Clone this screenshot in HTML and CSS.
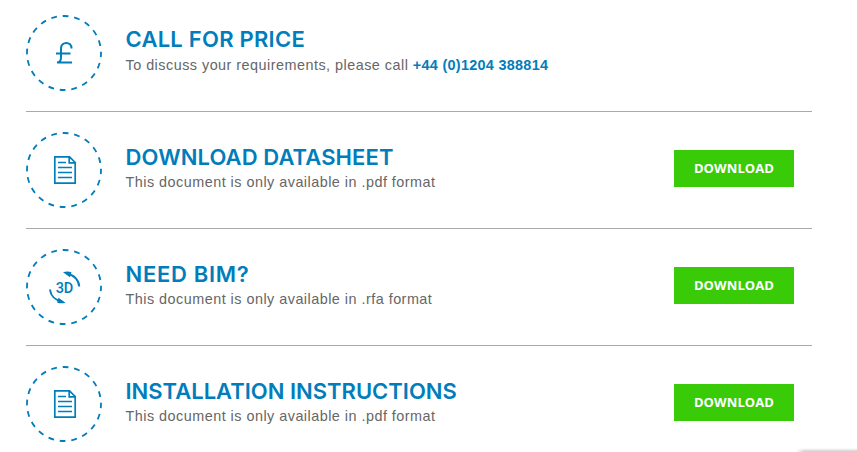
FILE: index.html
```
<!DOCTYPE html>
<html lang="en">
<head>
  <meta charset="UTF-8" />
  <meta name="viewport" content="width=device-width, initial-scale=1.0"/>
  <title>Downloads</title>
  <link rel="stylesheet" href="styles.css">
</head>
<body>

<div class="resources">
  <div class="resource">
    <svg class="icon" viewBox="0 0 76 76">
      <circle class="ring" cx="38" cy="38" r="37"/>
      <path class="line" d="M45.5 33.5C45.8 26 35 26 35 33.5V42.5C35 45.5 33.5 47.3 31 47.5H46M30 38.5H44.5"/>
    </svg>
    <div class="info">
      <h2 class="title price">Call for price</h2>
      <p class="text">To discuss your requirements, please call <a class="phone" href="tel:+4401204388814">+44 (0)1204 388814</a></p>
    </div>
  </div>

  <div class="resource">
    <svg class="icon" viewBox="0 0 76 76">
      <circle class="ring" cx="38" cy="38" r="37"/>
      <path class="doc" d="M28.8 24.8H43.5L49.2 30.5V51.2H28.8ZM43.2 25V30.8H49M32 30.5H40M32 35.5H46M32 40.5H46M32 45.5H46"/>
    </svg>
    <div class="info">
      <h2 class="title datasheet">Download datasheet</h2>
      <p class="text">This document is only available in .pdf format</p>
    </div>
    <a class="button" href="#">Download</a>
  </div>

  <div class="resource">
    <svg class="icon" viewBox="0 0 76 76">
      <circle class="ring" cx="38" cy="38" r="37"/>
      <path class="line" d="M41 24.8C48.5 26 53 31.5 53.2 37.5M24 40.5C24.5 46.5 29 51 35.5 52.3"/>
      <path class="arrow" d="M37 23.3C40 22.3 43 22.5 45.500 23.3L44 28.2ZM39.5 53.7C36.5 54.7 34 54.5 31 53.5L32.5 48.8Z"/>
      <text class="label" x="38.3" y="43.5">3D</text>
    </svg>
    <div class="info">
      <h2 class="title bim">Need BIM?</h2>
      <p class="text">This document is only available in .rfa format</p>
    </div>
    <a class="button" href="#">Download</a>
  </div>

  <div class="resource">
    <svg class="icon" viewBox="0 0 76 76">
      <circle class="ring" cx="38" cy="38" r="37"/>
      <path class="doc" d="M28.8 24.8H43.5L49.2 30.5V51.2H28.8ZM43.2 25V30.8H49M32 30.5H40M32 35.5H46M32 40.5H46M32 45.5H46"/>
    </svg>
    <div class="info">
      <h2 class="title">Installation instructions</h2>
      <p class="text">This document is only available in .pdf format</p>
    </div>
    <a class="button" href="#">Download</a>
  </div>
</div>

<div class="chat"></div>

</body>
</html>
```
FILE: styles.css
```
body {
  position: relative;
  margin: 0;
  height: 452px;
  background: #fff;
  font-family: "Liberation Sans", Arial, sans-serif;
}

.resources {
  width: 786px;
  padding: 15px 0 0 26px;
}

.resource {
  display: flex;
  align-items: center;
  height: 76px;
  padding-bottom: 20px;
  margin-bottom: 20px;
  border-bottom: 1px solid #a9a9a9;
}

.resource:last-child {
  padding-bottom: 0;
  margin-bottom: 0;
  border-bottom: none;
}

.icon {
  flex: none;
  width: 76px;
  height: 76px;
  margin-right: 23.5px;
}

.ring {
  fill: none;
  stroke: #007dba;
  stroke-width: 1.8;
  stroke-dasharray: 5.8 5.824;
  stroke-dashoffset: 1.6;
}

.line,
.doc {
  fill: none;
  stroke: #007dba;
  stroke-width: 2;
}

.doc {
  stroke-width: 1.7;
}

.arrow {
  fill: #007dba;
}

.label {
  fill: #007dba;
  font-family: Roboto, sans-serif;
  font-size: 14.5px;
  font-weight: 500;
  text-anchor: middle;
  letter-spacing: -0.4px;
}

.info {
  flex: 1;
  padding-bottom: 5px;
}

.title {
  margin: 0;
  color: #007dba;
  font-family: Inter, sans-serif;
  font-size: 22px;
  font-weight: 600;
  line-height: 28px;
  text-transform: uppercase;
  white-space: nowrap;
}

.price {
  margin-top: -1px;
  padding-bottom: 1px;
  letter-spacing: 0.25px;
}

.datasheet {
  letter-spacing: 0.1px;
}

.bim {
  letter-spacing: 0.7px;
}

.text {
  margin: 0;
  color: #666;
  font-size: 14.4px;
  line-height: 22px;
  letter-spacing: 0.48px;
  white-space: nowrap;
}

.phone {
  color: #007dba;
  font-weight: bold;
  letter-spacing: 0.3px;
  text-decoration: none;
}

.button {
  width: 120px;
  height: 37px;
  margin-right: 18px;
  margin-bottom: 3px;
  background: #39cb07;
  color: #fff;
  font-family: "Open Sans", sans-serif;
  font-size: 13px;
  font-weight: 700;
  line-height: 37px;
  letter-spacing: 0.1px;
  text-align: center;
  text-decoration: none;
  text-transform: uppercase;
}

/* top edge of the chat widget */
.chat {
  position: absolute;
  bottom: 0;
  left: 796px;
  width: 61px;
  height: 4px;
  background: linear-gradient(rgba(0, 0, 0, 0), rgba(0, 0, 0, 0.2));
  -webkit-mask-image: linear-gradient(to right, transparent, #000 8px);
  mask-image: linear-gradient(to right, transparent, #000 8px);
}
```
